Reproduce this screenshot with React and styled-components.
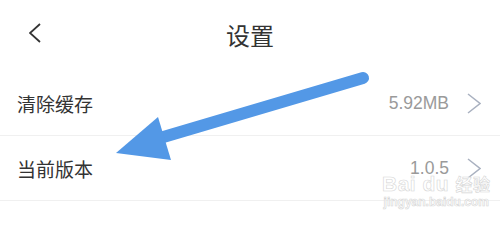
import React from "react";
import styled, { createGlobalStyle } from "styled-components";

const GlobalStyle = createGlobalStyle`
  html, body {
    margin: 0;
    padding: 0;
    background: #ffffff;
  }
  body {
    font-family: "Noto Sans CJK SC", "Noto Sans", sans-serif;
    color: #333333;
  }
`;

const Page = styled.div`
  position: relative;
  width: 500px;
  height: 216px;
  overflow: hidden;
  background: #ffffff;
`;

const Header = styled.div`
  height: 71px;
  display: grid;
  grid-template-columns: 100px 1fr 100px;
  align-items: center;
`;

const BackButton = styled.div`
  display: flex;
  align-items: center;
  padding-left: 29px;
  padding-bottom: 6px;
`;

const Title = styled.h1`
  margin: 0;
  padding-bottom: 2px;
  text-align: center;
  font-size: 24px;
  font-weight: 400;
  color: #333333;
  line-height: 1;
`;

const Row = styled.div`
  height: 64px;
  display: flex;
  align-items: center;
  justify-content: space-between;
  padding: 0 19px 0 17px;
  border-bottom: 1px solid #f0f0f0;
`;

const Label = styled.span`
  font-size: 19px;
  color: #333333;
  line-height: 1;
`;

const Right = styled.div`
  display: flex;
  align-items: center;
  gap: 18px;
`;

const Value = styled.span`
  font-family: "Liberation Sans", Arial, sans-serif;
  font-size: 17.5px;
  color: #9a9a9a;
  line-height: 1;
  padding-top: 1px;
`;

const Overlay = styled.svg`
  position: absolute;
  left: 0;
  top: 0;
  pointer-events: none;
`;

const Watermark = styled.div`
  position: absolute;
  left: 382px;
  top: 177px;
  display: flex;
  flex-direction: column;
  align-items: center;
  color: rgba(255, 255, 255, 0.7);
  -webkit-text-stroke: 0.6px #d6d6d6;
  pointer-events: none;
`;

const MarkLogo = styled.span`
  font-family: "Liberation Sans", Arial, sans-serif;
  font-size: 21px;
  font-weight: 700;
  line-height: 14px;
  letter-spacing: 0.5px;
`;

const MarkCn = styled.span`
  font-family: "Noto Sans CJK SC", sans-serif;
  font-size: 17px;
  font-weight: 700;
`;

const MarkUrl = styled.span`
  font-family: "Liberation Sans", Arial, sans-serif;
  font-size: 12px;
  font-weight: 700;
  line-height: 1;
  margin-top: 5px;
`;

const Chevron = ({ dir = "right", color, width, height, stroke }) => (
  <svg width={width} height={height} viewBox={`0 0 ${width} ${height}`}>
    <polyline
      points={
        dir === "right"
          ? `1,1 ${width - 1},${height / 2} 1,${height - 1}`
          : `${width - 1},1 1,${height / 2} ${width - 1},${height - 1}`
      }
      fill="none"
      stroke={color}
      strokeWidth={stroke}
      strokeLinejoin="miter"
    />
  </svg>
);

const rows = [
  { label: "清除缓存", value: "5.92MB" },
  { label: "当前版本", value: "1.0.5" },
];

export default function App() {
  return (
    <Page>
      <GlobalStyle />
      <Header>
        <BackButton>
          <Chevron dir="left" color="#333" width={12} height={20} stroke={1.8} />
        </BackButton>
        <Title>设置</Title>
        <div />
      </Header>
      {rows.map((r) => (
        <Row key={r.label}>
          <Label>{r.label}</Label>
          <Right>
            <Value>{r.value}</Value>
            <Chevron color="#a9b1c0" width={14} height={21} stroke={1.5} />
          </Right>
        </Row>
      ))}

      <Watermark>
        <MarkLogo>
          Bai du <MarkCn>经验</MarkCn>
        </MarkLogo>
        <MarkUrl>jingyan.baidu.com</MarkUrl>
      </Watermark>

      <Overlay width="500" height="216" viewBox="0 0 500 216">
        <line
          x1="363"
          y1="78"
          x2="160"
          y2="138"
          stroke="#5398e6"
          strokeWidth="12"
          strokeLinecap="round"
        />
        <polygon points="116,153 158,117 171,160" fill="#5398e6" />
      </Overlay>
    </Page>
  );
}
